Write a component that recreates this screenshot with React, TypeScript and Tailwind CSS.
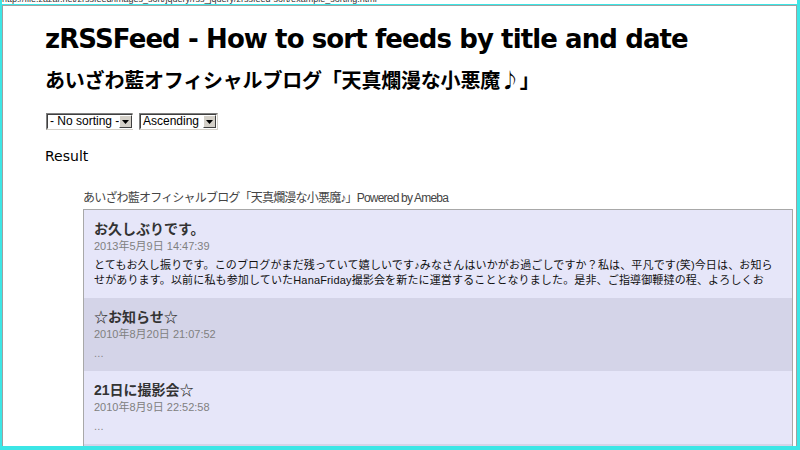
import React from "react";

const jp = { fontFamily: '"Liberation Sans", "Noto Sans CJK JP", sans-serif' };
const jpOnly = { fontFamily: '"Noto Sans CJK JP", sans-serif' };
const tahoma = { fontFamily: '"DejaVu Sans", "Noto Sans CJK JP", sans-serif' };

function Select({ label, width }: { label: string; width: string }) {
  return (
    <div
      className={`${width} h-[17px] flex items-stretch bg-white border border-t-[#808080] border-l-[#808080] border-b-[#d4d0c8] border-r-[#d4d0c8]`}
    >
      <div className="flex-1 flex items-stretch border border-t-[#404040] border-l-[#404040] border-b-white border-r-white">
        <div
          className="flex-1 text-[12px] leading-[13px] pl-[2px] text-black whitespace-nowrap overflow-hidden"
          style={{ fontFamily: '"Liberation Sans", sans-serif' }}
        >
          {label}
        </div>
        <div className="w-[13px] bg-[#d4d0c8] border border-t-white border-l-white border-b-[#404040] border-r-[#404040] flex items-center justify-center">
          <svg width="7" height="4" viewBox="0 0 7 4">
            <path d="M0 0 H7 L3.5 4 Z" fill="#000" />
          </svg>
        </div>
      </div>
    </div>
  );
}

function Item({
  title,
  date,
  lines,
  bg,
}: {
  title: string;
  date: string;
  lines: string[];
  bg: string;
}) {
  return (
    <div className={`${bg} pl-[10px] pt-[10px] pb-[10px]`}>
      <div className="text-[14px] leading-[18px] font-bold text-[#333] whitespace-nowrap" style={jp}>
        {title}
      </div>
      <div className="text-[11px] leading-[17px] text-[#808080] whitespace-nowrap" style={jp}>
        {date}
      </div>
      <div className="mt-[3px]">
        {lines.map((l, i) => (
          <div
            key={i}
            className={`text-[11px] leading-[15px] whitespace-nowrap overflow-hidden tracking-[0.15px] ${
              l === "..." ? "text-[#888]" : "text-[#111]"
            }`}
            style={jp}
          >
            {l}
          </div>
        ))}
      </div>
    </div>
  );
}

export default function App() {
  return (
    <div className="w-[800px] h-[450px] bg-[#3ce6e6] pl-[2px] pr-[3px] pb-[4px] flex flex-col overflow-hidden">
      <div className="h-[4px] bg-white overflow-hidden">
        <div
          className="text-[9px] leading-[9px] -mt-[5px] text-[#333] whitespace-nowrap"
          style={{ fontFamily: '"Liberation Sans", sans-serif' }}
        >
          http://file.zazar.net/zrssfeed/images_sort/jquery/rss_jquery/zrssfeed-sort/example_sorting.html
        </div>
      </div>
      <div className="h-[1px]" />
      <div className="flex-1 bg-white border-t border-l border-r border-[#a0a0a0] overflow-hidden pl-[42px]">
        <h1
          className="mt-[17px] text-[26px] leading-[32px] font-bold text-black tracking-[-0.9px] whitespace-nowrap"
          style={tahoma}
        >
          zRSSFeed - How to sort feeds by title and date
        </h1>
        <h2
          className="mt-[11px] text-[20px] leading-[28px] font-bold text-black whitespace-nowrap tracking-[-0.2px]"
          style={jpOnly}
        >
          あいざわ藍オフィシャルブログ「天真爛漫な小悪魔♪」
        </h2>
        <div className="mt-[19px] flex gap-[6px] pl-[1px]">
          <Select label="- No sorting -" width="w-[87px]" />
          <Select label="Ascending" width="w-[79px]" />
        </div>
        <div className="mt-[16px] text-[14px] leading-[20px] text-black" style={tahoma}>
          Result
        </div>
        <div className="ml-[38px] mt-[24px]">
          <div className="text-[12px] leading-[16px] text-[#444] whitespace-nowrap tracking-[-0.8px]" style={jp}>
            あいざわ藍オフィシャルブログ「天真爛漫な小悪魔♪」Powered by Ameba
          </div>
          <div className="mt-[3px] w-[710px] border border-[#a8a8a8] bg-[#d4d4e8]">
            <Item
              bg="bg-[#e6e6f9]"
              title="お久しぶりです。"
              date="2013年5月9日 14:47:39"
              lines={[
                "とてもお久し振りです。このブログがまだ残っていて嬉しいです♪みなさんはいかがお過ごしですか？私は、平凡です(笑)今日は、お知ら",
                "せがあります。以前に私も参加していたHanaFriday撮影会を新たに運営することとなりました。是非、ご指導御鞭撻の程、よろしくお",
              ]}
            />
            <Item bg="bg-[#d4d4e8]" title="☆お知らせ☆" date="2010年8月20日 21:07:52" lines={["..."]} />
            <Item bg="bg-[#e6e6f9]" title="21日に撮影会☆" date="2010年8月9日 22:52:58" lines={["..."]} />
            <div className="h-[40px] bg-[#d4d4e8]" />
          </div>
        </div>
      </div>
    </div>
  );
}
